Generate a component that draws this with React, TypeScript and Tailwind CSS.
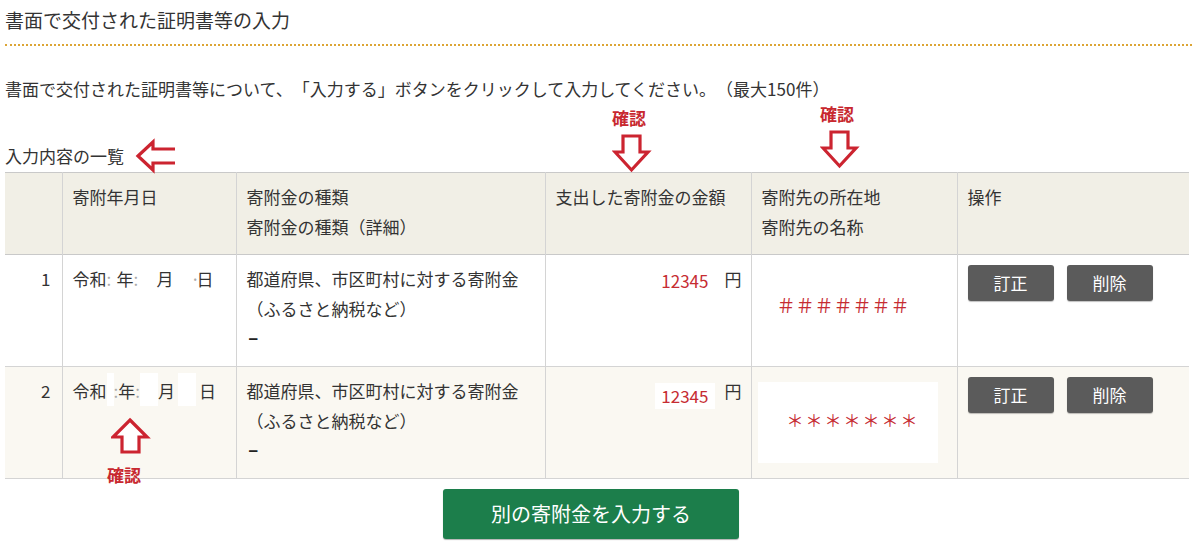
import React from 'react'

const RED = '#cc2430'

const Arrow = ({ d, className }: { d: string; className: string }) => (
    <svg className={`absolute ${className}`} viewBox="0 0 40 40" width="40" height="40">
        <path d={d} fill="#fff" stroke={RED} strokeWidth="3.2" strokeLinejoin="miter" />
    </svg>
)

// 注記（赤い矢印と「確認」）
const Notes = () => (
    <>
        <div className="absolute left-[612px] top-[107px] text-[17px] leading-[22px] font-bold text-[#c8282f]">確認</div>
        <Arrow className="left-[612px] top-[134px]" d="M11 2 H28 V18 H36 L19.5 36 L3 18 H11 Z" />
        <div className="absolute left-[820px] top-[103px] text-[17px] leading-[22px] font-bold text-[#c8282f]">確認</div>
        <Arrow className="left-[820px] top-[130px]" d="M11 2 H28 V18 H36 L19.5 36 L3 18 H11 Z" />
        <Arrow className="left-[135px] top-[136px]" d="M3 20 L18 6 V13 H42 V27 H18 V34 Z" />
        <Arrow className="left-[111px] top-[417px]" d="M19 3 L36 20 H28 V35 H11 V20 H2 Z" />
        <div className="absolute left-[107px] top-[464px] text-[17px] leading-[22px] font-bold text-[#c8282f]">確認</div>
    </>
)

const Buttons = () => (
    <div className="flex gap-[13px] pt-[1px]">
        <button className="w-[86px] h-[36px] rounded-[3px] bg-[#5b5b5b] text-white text-[17px] shadow-[0_1px_1px_rgba(0,0,0,0.25)]">訂正</button>
        <button className="w-[86px] h-[36px] rounded-[3px] bg-[#5b5b5b] text-white text-[17px] shadow-[0_1px_1px_rgba(0,0,0,0.25)]">削除</button>
    </div>
)

const Kind = () => (
    <>
        <div>都道府県、市区町村に対する寄附金</div>
        <div>（ふるさと納税など）</div>
        <div className="font-bold pl-[2px] text-[#222]" style={{ fontFamily: '"Liberation Sans", sans-serif' }}>–</div>
    </>
)

const td = 'align-top border-l border-[#d4d4d4] pt-[9px] px-[10px]'

export default function App() {
    return (
        <div className="relative min-h-[547px] bg-white text-[#333] pl-[5px] pr-[8px] [text-spacing-trim:space-all]" style={{ fontFamily: '"Noto Sans CJK JP", "Noto Sans", sans-serif' }}>
            <h1 className="text-[19px] leading-[28px] pt-[6px] pb-[10px] border-b-2 border-dotted border-[#dca535] font-normal">
                書面で交付された証明書等の入力
            </h1>
            <p className="mt-[28px] text-[17px] leading-[30px]">
                書面で交付された証明書等について、「入力する」ボタンをクリックして入力してください。（最大150件）
            </p>
            <div className="mt-[37px] text-[17px] leading-[30px]">入力内容の一覧</div>

            <table className="w-[1184px] table-fixed border-collapse text-[17px] leading-[30px] mt-[1px]">
                <colgroup>
                    <col className="w-[57px]" />
                    <col className="w-[174px]" />
                    <col className="w-[309px]" />
                    <col className="w-[206px]" />
                    <col className="w-[206px]" />
                    <col className="w-[232px]" />
                </colgroup>
                <thead>
                    <tr className="h-[82px] bg-[#f1efe6] border-t border-b border-[#c9c9c9] text-left">
                        <th className="align-top font-normal"></th>
                        <th className={`${td} font-normal`}>寄附年月日</th>
                        <th className={`${td} font-normal`}>
                            <div>寄附金の種類</div>
                            <div>寄附金の種類（詳細）</div>
                        </th>
                        <th className={`${td} font-normal`}>支出した寄附金の金額</th>
                        <th className={`${td} font-normal`}>
                            <div>寄附先の所在地</div>
                            <div>寄附先の名称</div>
                        </th>
                        <th className={`${td} font-normal`}>操作</th>
                    </tr>
                </thead>
                <tbody>
                    <tr className="h-[112px] bg-white border-b border-[#d4d4d4]">
                        <td className="align-top pt-[9px] pr-[11px] text-right">1</td>
                        <td className={td}>
                            <div className="flex">
                                <span>令和</span>
                                <span className="w-[10px] text-[#aaa]">:</span>
                                <span>年</span>
                                <span className="w-[23px] text-[#aaa]">:</span>
                                <span>月</span>
                                <span className="w-[17px]"></span>
                                <span className="w-[6px] text-[#aaa] text-center">·</span>
                                <span>日</span>
                            </div>
                        </td>
                        <td className={td}>
                            <Kind />
                        </td>
                        <td className={`${td} text-right pr-[9px]`}>
                            <span className="text-[#c62c32] relative top-[2px]">12345</span>
                            <span className="ml-[16px]">円</span>
                        </td>
                        <td className="align-top border-l border-[#d4d4d4] pt-[35px] pl-[25px]">
                            <span className="text-[#c62c32] text-[19px]">＃＃＃＃＃＃＃</span>
                        </td>
                        <td className={td}>
                            <Buttons />
                        </td>
                    </tr>
                    <tr className="h-[112px] bg-[#faf8f2] border-b border-[#d4d4d4]">
                        <td className="align-top pt-[9px] pr-[11px] text-right">2</td>
                        <td className={td}>
                            <div className="flex items-start">
                                <span>令和</span>
                                <span className="w-[7px] h-[33px] -mt-[3px] bg-white"></span>
                                <span className="text-[#aaa]">:</span>
                                <span>年</span>
                                <span className="text-[#aaa]">:</span>
                                <span className="w-[18px] h-[33px] -mt-[3px] bg-white"></span>
                                <span>月</span>
                                <span className="w-[3px]"></span>
                                <span className="w-[18px] h-[33px] -mt-[3px] bg-white"></span>
                                <span className="w-[3px]"></span>
                                <span>日</span>
                            </div>
                        </td>
                        <td className={td}>
                            <Kind />
                        </td>
                        <td className={`${td} text-right pr-[9px]`}>
                            <span className="inline-block bg-white px-[6px] h-[26px] leading-[26px] relative top-[5px] text-[#c62c32]">12345</span>
                            <span className="ml-[10px]">円</span>
                        </td>
                        <td className="align-top border-l border-[#d4d4d4] pt-[15px] pl-[6px]">
                            <div className="w-[180px] h-[81px] bg-white pt-[23px] pl-[29px]">
                                <span className="text-[#c62c32] tracking-[2px]">＊＊＊＊＊＊＊</span>
                            </div>
                        </td>
                        <td className={td}>
                            <Buttons />
                        </td>
                    </tr>
                </tbody>
            </table>

            <div className="mt-[10px] ml-[438px]">
                <button className="w-[296px] h-[50px] rounded-[3px] bg-[#1c7e4b] text-white text-[20px] shadow-[0_1px_1px_rgba(0,0,0,0.3)]">
                    別の寄附金を入力する
                </button>
            </div>

            <Notes />
        </div>
    )
}
